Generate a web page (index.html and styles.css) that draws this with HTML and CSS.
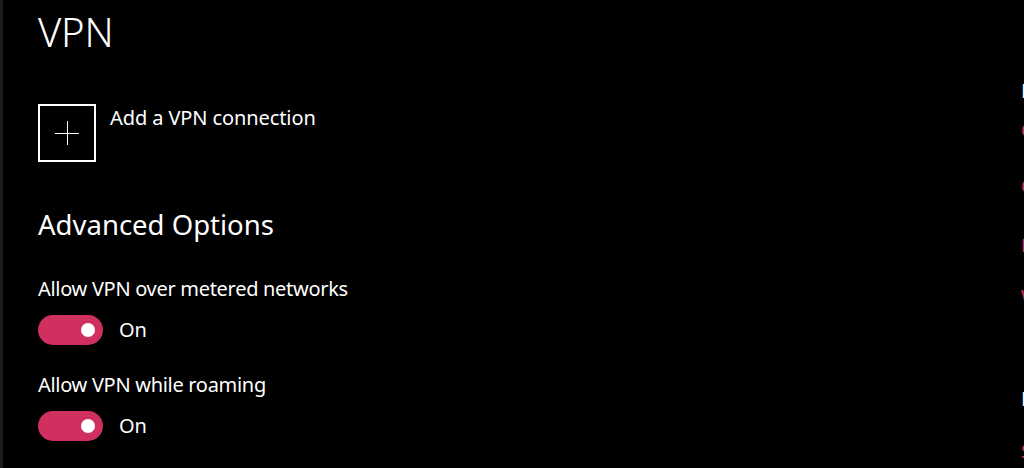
FILE: index.html
```html
<!DOCTYPE html>
<html lang="en">
<head>
<meta charset="utf-8">
<title>VPN</title>
<link rel="stylesheet" href="styles.css">
</head>
<body>
<div class="page">
  <main class="main">
    <h1 class="title">VPN</h1>
    <div class="add-row">
      <div class="add-box">
        <svg class="plus" width="24" height="24" viewBox="0 0 24 24"><path d="M12.5 0V24M0 12.5H24" stroke="#fff" stroke-width="1" fill="none"/></svg>
      </div>
      <span class="add-label">Add a VPN connection</span>
    </div>
    <h2 class="section">Advanced Options</h2>
    <div class="setting">
      <div class="setting-label">Allow VPN over metered networks</div>
      <div class="toggle-row">
        <span class="toggle"><span class="knob"></span></span>
        <span class="toggle-state">On</span>
      </div>
    </div>
    <div class="setting">
      <div class="setting-label">Allow VPN while roaming</div>
      <div class="toggle-row">
        <span class="toggle"><span class="knob"></span></span>
        <span class="toggle-state">On</span>
      </div>
    </div>
  </main>
  <aside class="aside">
    <div class="aside-head">Related settings</div>
    <a class="link l1">Change adapter options</a>
    <a class="link l2">Change advanced sharing options</a>
    <a class="link l3">Network and Sharing Center</a>
    <a class="link l4">Windows Firewall</a>
    <div class="aside-head h2">Have a question?</div>
    <a class="link l5">Setting up a VPN</a>
  </aside>
</div>
</body>
</html>
```
FILE: styles.css
```css
html, body {
  margin: 0;
  padding: 0;
  background: #000;
  height: 468px;
  overflow: hidden;
}
body {
  color: #fff;
  font-family: "Noto Sans", "Open Sans", sans-serif;
}
.page {
  display: flex;
  height: 468px;
  border-left: 3px solid #1c1c1c;
  overflow: hidden;
}
.main {
  flex: 0 0 1018px;
  box-sizing: border-box;
  padding: 8px 0 0 35px;
  display: flex;
  flex-direction: column;
  align-items: flex-start;
}
.title {
  margin: 0;
  font-size: 40px;
  line-height: 48px;
  font-weight: 300;
  letter-spacing: -0.2px;
}
.add-row {
  margin-top: 48px;
  display: flex;
  align-items: flex-start;
  gap: 14px;
}
.add-box {
  width: 58px;
  height: 58px;
  box-sizing: border-box;
  border: 2px solid #fff;
  display: flex;
  align-items: center;
  justify-content: center;
}
.add-label {
  font-size: 20px;
  line-height: 28px;
  letter-spacing: -0.1px;
}
.section {
  margin: 45px 0 0;
  font-size: 27.5px;
  line-height: 36px;
  font-weight: 400;
  letter-spacing: 0;
}
.setting {
  margin-top: 32px;
}
.setting + .setting {
  margin-top: 26px;
}
.setting-label {
  font-size: 20px;
  line-height: 28px;
  letter-spacing: -0.3px;
}
.toggle-row {
  margin-top: 12px;
  display: flex;
  align-items: center;
  gap: 16px;
}
.toggle {
  width: 65px;
  height: 30px;
  border-radius: 15px;
  background: #d03060;
  display: flex;
  align-items: center;
  justify-content: flex-end;
  padding-right: 8px;
  box-sizing: border-box;
}
.knob {
  width: 14px;
  height: 14px;
  border-radius: 50%;
  background: #fff;
}
.toggle-state {
  font-size: 20px;
  line-height: 28px;
}
.aside {
  flex: 0 0 300px;
  padding-top: 77px;
  display: flex;
  flex-direction: column;
  align-items: flex-start;
}
.aside-head {
  font-size: 20px;
  line-height: 28px;
}
.link {
  color: #d03060;
  font-size: 18px;
  line-height: 24px;
}
.l1 { margin-top: 13px; }
.l2 { margin-top: 32px; }
.l3 { margin-top: 35px; }
.l4 { margin-top: 27px; }
.aside-head.h2 { margin-top: 77px; }
.l5 { margin-top: 26px; }
```
